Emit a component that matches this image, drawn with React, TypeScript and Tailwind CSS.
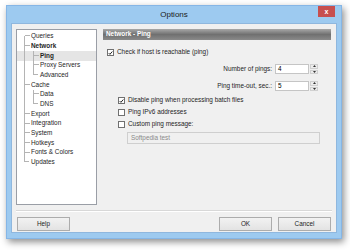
const font = { fontFamily: '"Liberation Sans", Arial, sans-serif' };

type Node = { label: string; level: number; bold?: boolean; selected?: boolean; first?: boolean; last?: boolean };

const tree: Node[] = [
  { label: "Queries", level: 0, first: true },
  { label: "Network", level: 0, bold: true },
  { label: "Ping", level: 1, bold: true, selected: true },
  { label: "Proxy Servers", level: 1 },
  { label: "Advanced", level: 1, last: true },
  { label: "Cache", level: 0 },
  { label: "Data", level: 1 },
  { label: "DNS", level: 1, last: true },
  { label: "Export", level: 0 },
  { label: "Integration", level: 0 },
  { label: "System", level: 0 },
  { label: "Hotkeys", level: 0 },
  { label: "Fonts & Colors", level: 0 },
  { label: "Updates", level: 0, last: true },
];

function Guide({ stub, first, last }: { stub: boolean; first?: boolean; last?: boolean }) {
  return (
    <div className="flex h-full w-[9px] shrink-0 flex-col">
      <div className={`h-1/2 ${first ? "" : "border-l"} border-[#b4b4b4]`} />
      <div className={`h-1/2 ${last ? "" : "border-l"} border-[#b4b4b4]`}>
        {stub && <div className="-mt-px w-[5px] border-t border-[#b4b4b4]" />}
      </div>
    </div>
  );
}

function TreeRow({ n }: { n: Node }) {
  return (
    <div className={`flex h-[9.7px] items-center pl-[7px] ${n.selected ? "bg-[#e5e5e5]" : ""}`}>
      {n.level === 0 ? (
        <Guide stub first={n.first} last={n.last} />
      ) : (
        <>
          <Guide stub={false} />
          <Guide stub last={n.last} />
        </>
      )}
      <span className={`ml-[-2px] text-[6.4px] leading-none text-[#1e1e1e] ${n.bold ? "font-bold" : ""}`}>{n.label}</span>
    </div>
  );
}

function Check({ checked }: { checked?: boolean }) {
  return (
    <div className="flex h-[7px] w-[7px] shrink-0 items-center justify-center border border-[#707070] bg-white">
      {checked && (
        <svg width="6" height="6" viewBox="0 0 6 6">
          <path d="M0.8 3.1 L2.3 4.6 L5.2 1.2" fill="none" stroke="#222" strokeWidth="1.2" />
        </svg>
      )}
    </div>
  );
}

function CheckRow({ label, checked, indent }: { label: string; checked?: boolean; indent: string }) {
  return (
    <div className={`flex h-[9px] items-center ${indent}`}>
      <Check checked={checked} />
      <span className="ml-[3px] text-[6.4px] leading-none text-[#1e1e1e]">{label}</span>
    </div>
  );
}

function Spin({ label, value, mt }: { label: string; value: string; mt: string }) {
  return (
    <div className={`flex h-[10px] items-center justify-end pr-[13px] ${mt}`}>
      <span className="mr-[3px] text-[6.4px] leading-none text-[#1e1e1e]">{label}</span>
      <div className="flex h-full w-[34px] items-center border border-[#c5c5c5] bg-white pl-[2px] text-[6.4px] leading-none">
        {value}
      </div>
      <div className="ml-px flex h-full w-[8px] flex-col gap-px">
        <div className="flex flex-1 items-center justify-center border border-[#d0d0d0] bg-[#ececec]">
          <svg width="3" height="2" viewBox="0 0 3 2"><path d="M0 2 L1.5 0 L3 2Z" fill="#333" /></svg>
        </div>
        <div className="flex flex-1 items-center justify-center border border-[#d0d0d0] bg-[#ececec]">
          <svg width="3" height="2" viewBox="0 0 3 2"><path d="M0 0 L1.5 2 L3 0Z" fill="#333" /></svg>
        </div>
      </div>
    </div>
  );
}

function Btn({ label }: { label: string }) {
  return (
    <div className="flex h-[14px] w-[53px] items-center justify-center border border-[#acacac] bg-gradient-to-b from-[#f2f2f2] to-[#e3e3e3] text-[6.4px] leading-none text-[#1e1e1e]">
      {label}
    </div>
  );
}

export default function App() {
  return (
    <div className="h-[251px] w-[350px] overflow-hidden bg-white pl-[6px] pt-[5px]" style={font}>
      <div className="flex h-[234px] w-[336px] flex-col border border-[#86b6e6] bg-[#9dcaf0] shadow-[2px_3px_7px_rgba(0,0,0,0.45)]">
        <div className="relative flex h-[17px] shrink-0 items-center justify-center">
          <span className="text-[8px] leading-none text-[#1a1a1a]">Options</span>
          <div className="absolute right-[6px] top-0 flex h-[11px] w-[17px] items-center justify-center bg-[#c74f4f]">
            <span className="text-[7px] font-bold leading-none text-white">x</span>
          </div>
        </div>
        <div className="mx-[4px] flex h-[210px] flex-col border border-[#8fb7de] bg-[#f0f0f0] px-[4px] pt-[5px]">
          <div className="flex">
            <div className="h-[176px] w-[81px] shrink-0 border border-[#9a9ea6] bg-white pt-[1.5px]">
              {tree.map((n) => (
                <TreeRow key={n.label} n={n} />
              ))}
            </div>
            <div className="ml-[6px] flex flex-1 flex-col pr-[1px]">
              <div className="flex h-[11px] items-center bg-gradient-to-b from-[#a8a8a8] via-[#707070] to-[#8a8a8a] pl-[3px]">
                <span className="text-[6.4px] font-bold leading-none text-white">Network - Ping</span>
              </div>
              <div className="mt-[8px]">
                <CheckRow label="Check if host is reachable (ping)" checked indent="pl-[4px]" />
              </div>
              <Spin label="Number of pings:" value="4" mt="mt-[7px]" />
              <Spin label="Ping time-out, sec.:" value="5" mt="mt-[7px]" />
              <div className="mt-[5px] flex flex-col gap-[3px]">
                <CheckRow label="Disable ping when processing batch files" checked indent="pl-[15px]" />
                <CheckRow label="Ping IPv6 addresses" indent="pl-[15px]" />
                <CheckRow label="Custom ping message:" indent="pl-[15px]" />
              </div>
              <div className="ml-[24px] mr-[11px] mt-[3px] flex h-[12px] items-center border border-[#cfcfcf] bg-[#f0f0f0] pl-[3px] text-[6.4px] leading-none text-[#8a8a8a]">
                Softpedia test
              </div>
            </div>
          </div>
          <div className="mt-[5px] border-t border-[#d8d8d8] border-b border-b-white" />
          <div className="mt-[5px] flex items-center pl-[1px] pr-[1px]">
            <Btn label="Help" />
            <div className="ml-auto flex gap-[6px]">
              <Btn label="OK" />
              <Btn label="Cancel" />
            </div>
          </div>
        </div>
      </div>
    </div>
  );
}
